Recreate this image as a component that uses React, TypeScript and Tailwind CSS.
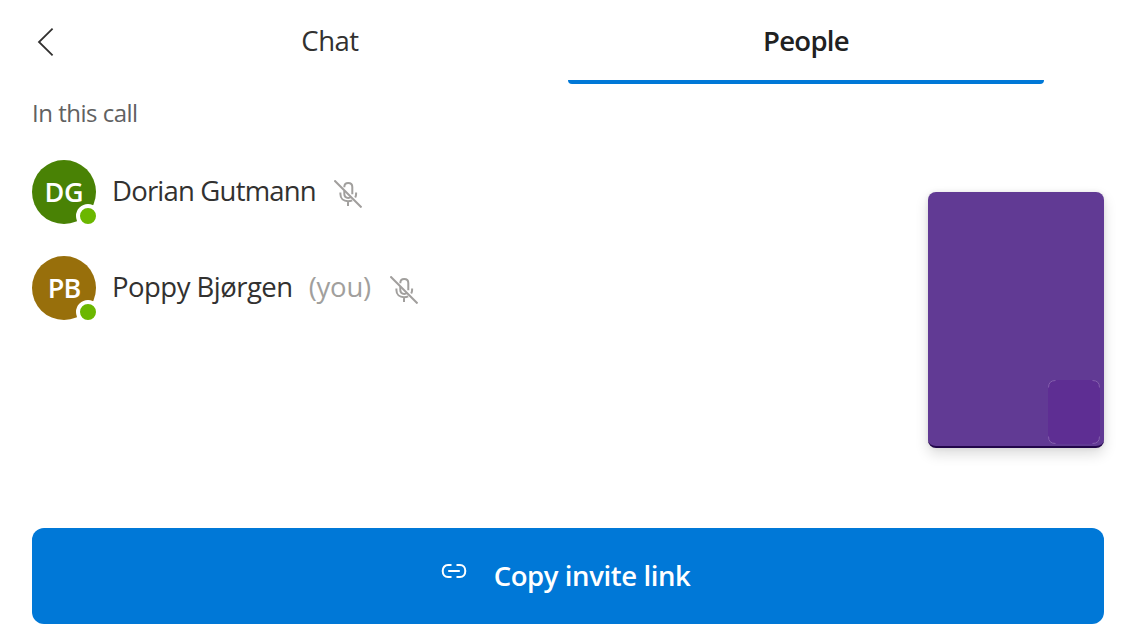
import React from "react";

function MicOff() {
  return (
    <svg width="28" height="28" viewBox="0 0 28 28" fill="none" stroke="#a19f9d" strokeWidth="2" className="shrink-0">
      <path d="M10.3 7.2C10.3 4.5 11.8 3 14.2 3C16.7 3 18.3 4.6 18.3 7V14.2" />
      <path d="M10.3 10.8V13.8C10.3 16.4 11.9 17.9 14.2 17.9C15.3 17.9 16.2 17.6 16.9 17" />
      <path d="M6.4 12.6V14C6.4 18.6 9.6 21.2 14 21.2C15.6 21.2 17 20.9 18.2 20.3M22.1 12.6V14C22.1 15.4 21.8 16.5 21.2 17.5M14 21V26" />
      <path d="M0.4 0.4L27.5 27.5" />
    </svg>
  );
}

type PersonProps = {
  initials: string;
  initialsStyle: string;
  name: string;
  color: string;
  nameSpacing: string;
  self?: boolean;
};

function Person({ initials, initialsStyle, name, color, nameSpacing, self }: PersonProps) {
  return (
    <li className="flex h-16 items-center">
      <div className={`relative flex size-16 shrink-0 items-center justify-center rounded-full text-[27px] font-semibold text-white ${color}`}>
        <span className={initialsStyle}>{initials}</span>
        <span className="absolute -right-1 -bottom-1 size-6 rounded-full border-4 border-white bg-[#6bb700]" />
      </div>
      <span className={`mb-0.5 ml-4 whitespace-nowrap text-[27.5px] leading-[40px] text-[#323130] ${nameSpacing}`}>{name}</span>
      {self && <span className="mb-0.5 ml-4 text-[27.5px] leading-[40px] tracking-[-0.2px] text-[#a19f9d]">(you)</span>}
      <span className="mt-1 ml-[18.5px]">
        <MicOff />
      </span>
    </li>
  );
}

export default function App() {
  return (
    <div className="relative flex h-[640px] w-[1136px] flex-col overflow-hidden bg-white font-['Open_Sans','Noto_Sans',sans-serif]">
      <header className="flex h-[84px] shrink-0">
        <button aria-label="Back" className="flex w-[92px] items-center pl-9">
          <svg width="20" height="30" viewBox="0 0 20 30" fill="none" stroke="#323130" strokeWidth="1.8">
            <path d="M16.6 1.6L3 15L16.6 28.4" />
          </svg>
        </button>
        <button className="flex w-[476px] flex-col items-center pt-[21px] text-[27.5px] leading-[40px] text-[#323130]">
          <span className="tracking-[-0.5px]">Chat</span>
        </button>
        <button className="flex w-[476px] flex-col items-center justify-between pt-[21px] text-[27.5px] leading-[40px] font-semibold text-[#212121]">
          <span className="tracking-[-0.7px]">People</span>
          <span className="h-1 w-full rounded-b bg-[#0078d7]" />
        </button>
      </header>
      <main className="flex-1 px-8 pt-[13px]">
        <h2 className="text-[24px] leading-[32px] tracking-[-0.5px] text-[#616161]">In this call</h2>
        <ul className="mt-[31px] flex flex-col gap-8">
          <Person initials="DG" initialsStyle="tracking-[-0.2px]" name="Dorian Gutmann" color="bg-[#498205]" nameSpacing="tracking-[-0.8px]" />
          <Person initials="PB" initialsStyle="tracking-[-0.9px]" name="Poppy Bjørgen" color="bg-[#986f0b]" nameSpacing="tracking-[-0.52px]" self />
        </ul>
      </main>
      <footer className="px-8 pb-4">
        <button className="flex h-24 w-full items-center justify-center rounded-[12px] bg-[#0078d7] pr-[5px] text-white">
          <svg width="26" height="16" viewBox="0 0 26 16" fill="none" stroke="currentColor" strokeWidth="2" className="mb-[10px]">
            <path d="M10.5 2H7C3.8 2 1.7 4.7 1.7 8S3.8 14 7 14H10.5M15.5 2H19C22.2 2 24.3 4.7 24.3 8S22.2 14 19 14H15.5M7.2 8H18.8" />
          </svg>
          <span className="ml-[27px] text-[27.5px] leading-[40px] font-semibold tracking-[-0.4px]">Copy invite link</span>
        </button>
      </footer>
      <aside className="absolute top-48 right-8 flex h-64 w-44 items-end justify-end rounded-lg border-b-2 border-[#22064a] bg-[#613a94] pr-1 pb-[2px] shadow-[0_6px_14px_rgba(0,0,0,0.14),0_0_5px_rgba(0,0,0,0.08)]">
        <svg width="52" height="64" viewBox="0 0 52 64" fill="none">
          <rect width="52" height="64" rx="8" fill="#5e2e93" />
          <path
            d="M0.5 7.5Q0.5 0.5 7.5 0.5M44.5 0.5Q51.5 0.5 51.5 7.5M51.5 56.5Q51.5 63.5 44.5 63.5M7.5 63.5Q0.5 63.5 0.5 56.5"
            stroke="#8d69b3"
            strokeWidth="0.8"
          />
        </svg>
      </aside>
    </div>
  );
}
